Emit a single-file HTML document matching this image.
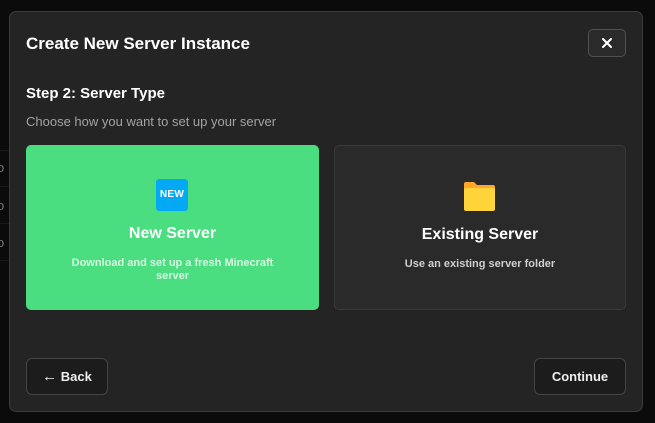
<!DOCTYPE html>
<html><head><meta charset="utf-8"><style>
*{box-sizing:border-box;margin:0;padding:0}
body{width:655px;height:423px;background:#0b0b0b;font-family:"Liberation Sans",sans-serif;position:relative;overflow:hidden}
.row{position:absolute;left:0;width:12px;height:1px;background:#1a1a1a}
.o{position:absolute;left:-3px;color:#777;font-size:13px}
.modal{position:absolute;left:9px;top:11px;width:634px;height:401px;background:#242424;border:1px solid #3b3b3b;border-radius:7px}
.abs{position:absolute}
h1{position:absolute;left:16px;top:22px;font-size:17px;color:#fff;font-weight:bold}
h2{position:absolute;left:16px;top:73px;font-size:15px;color:#fff;font-weight:bold}
.sub{position:absolute;left:16px;top:102px;font-size:13px;color:#a3a3a3}
.close{position:absolute;left:578px;top:17px;width:38px;height:28px;border:1px solid #505050;border-radius:5px;background:#2a2a2a}
.card{position:absolute;top:133px;height:165px;border-radius:5px;text-align:center}
.g{left:16px;width:293px;background:#4ade80}
.e{left:324px;width:292px;background:#2a2a2a;border:1px solid #3a3a3a}
.t{position:absolute;left:0;right:0;top:80px;font-size:16px;font-weight:bold;color:#fff}
.d{position:absolute;left:34px;right:34px;top:112px;font-size:11px;font-weight:bold;line-height:13px}
.btn{position:absolute;top:346px;height:37px;border:1px solid #444;border-radius:6px;background:#1c1c1c;color:#eee;font-weight:bold;font-size:13px;text-align:center;line-height:35px}
</style></head><body>
<div class="row" style="top:150px"></div><div class="row" style="top:186px"></div><div class="row" style="top:223px"></div><div class="row" style="top:260px"></div>
<div class="o" style="top:160px">o</div><div class="o" style="top:198px">o</div><div class="o" style="top:235px">o</div>
<div class="modal">
<h1>Create New Server Instance</h1>
<div class="close"><svg width="38" height="28" viewBox="0 0 38 28" style="position:absolute;left:-1px;top:-1px"><path d="M15 10 L23 18 M23 10 L15 18" stroke="#fff" stroke-width="2" stroke-linecap="round"/></svg></div>
<h2>Step 2: Server Type</h2>
<div class="sub">Choose how you want to set up your server</div>
<div class="card g">
<div class="abs" style="left:130px;top:34px;width:32px;height:32px;background:#03a9f4;border-radius:3px;color:#fff;font-size:10px;font-weight:bold;line-height:32px;letter-spacing:0.3px">NEW</div>
<div class="t">New Server</div>
<div class="d" style="color:#d8f7e2">Download and set up a fresh Minecraft server</div>
</div>
<div class="card e">
<svg class="abs" style="left:128px;top:35px" width="33" height="31" viewBox="0 0 33 31"><path d="M1 3 Q1 1 3 1 L11 1 L14 4 L30 4 Q32 4 32 6 L32 10 L1 10Z" fill="#ffa726"/><rect x="1" y="7" width="31" height="23" rx="2" fill="#ffd43b"/></svg>
<div class="t">Existing Server</div>
<div class="d" style="color:#cfcfcf">Use an existing server folder</div>
</div>
<div class="btn" style="left:16px;width:82px"><span style="font-size:15px">←</span> Back</div>
<div class="btn" style="left:524px;width:92px">Continue</div>
</div>
</body></html>
